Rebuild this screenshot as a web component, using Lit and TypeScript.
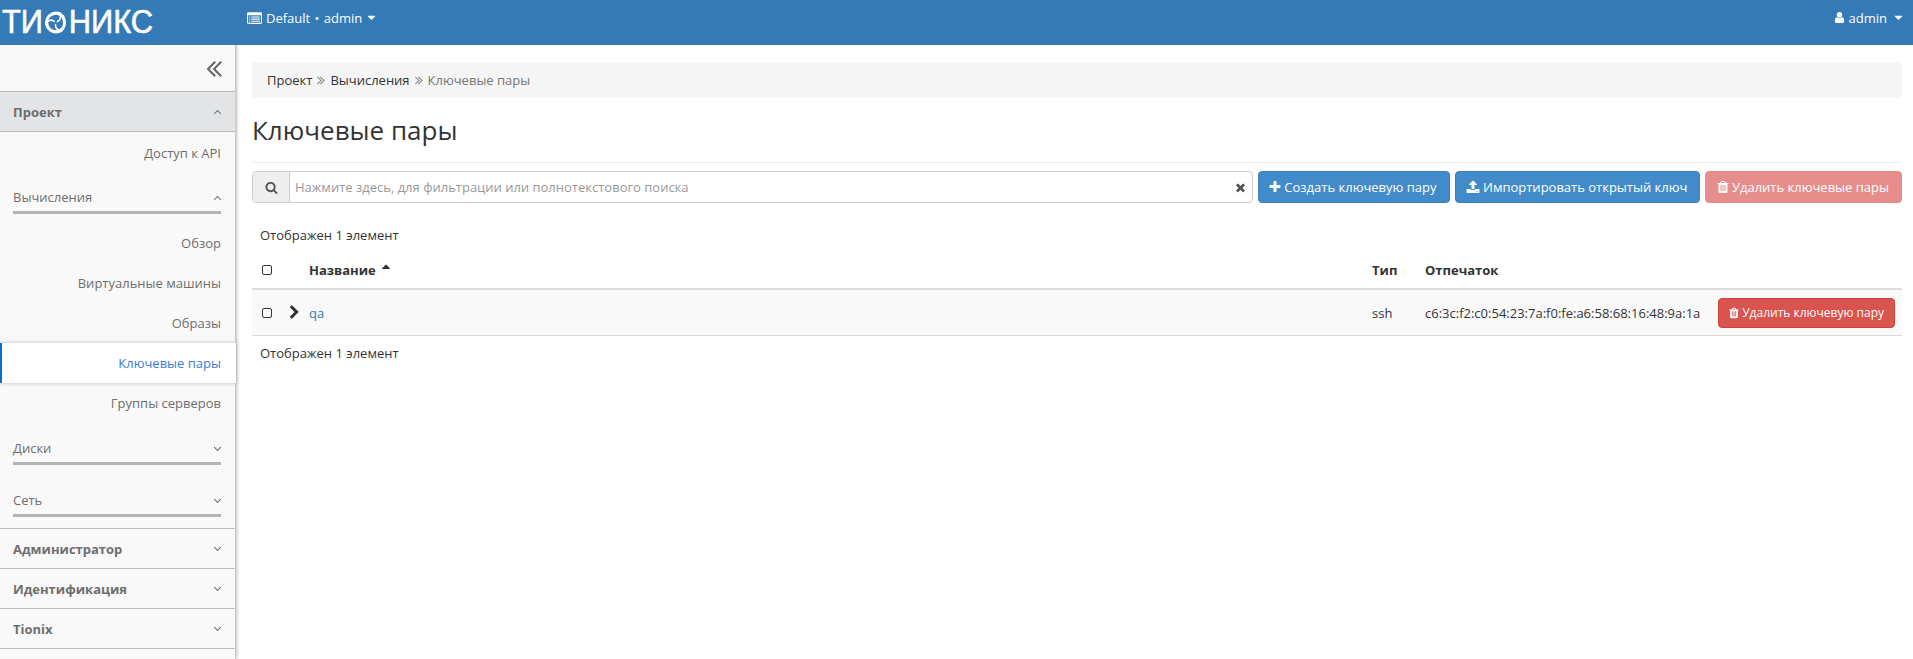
import { LitElement, html, css, svg } from "lit";
import { customElement } from "lit/decorators.js";

const P = {
  search: "M1216 832q0-185-131.5-316.5t-316.5-131.5-316.5 131.5-131.5 316.5 131.5 316.5 316.5 131.5 316.5-131.5 131.5-316.5zm512 832q0 52-38 90t-90 38q-54 0-90-38l-343-342q-179 124-399 124-143 0-273.5-55.5t-225-150-150-225-55.5-273.5 55.5-273.5 150-225 225-150 273.5-55.5 273.5 55.5 225 150 150 225 55.5 273.5q0 220-124 399l343 343q37 37 37 90z",
  plus: "M1600 736v192q0 40-28 68t-68 28h-416v416q0 40-28 68t-68 28h-192q-40 0-68-28t-28-68v-416h-416q-40 0-68-28t-28-68v-192q0-40 28-68t68-28h416v-416q0-40 28-68t68-28h192q40 0 68 28t28 68v416h416q40 0 68 28t28 68z",
  times: "M1490 1322q0 40-28 68l-136 136q-28 28-68 28t-68-28l-294-294-294 294q-28 28-68 28t-68-28l-136-136q-28-28-28-68t28-68l294-294-294-294q-28-28-28-68t28-68l136-136q28-28 68-28t68 28l294 294 294-294q28-28 68-28t68 28l136 136q28 28 28 68t-28 68l-294 294 294 294q28 28 28 68z",
  trash: "M704 1376v-704q0-14-9-23t-23-9h-64q-14 0-23 9t-9 23v704q0 14 9 23t23 9h64q14 0 23-9t9-23zm256 0v-704q0-14-9-23t-23-9h-64q-14 0-23 9t-9 23v704q0 14 9 23t23 9h64q14 0 23-9t9-23zm256 0v-704q0-14-9-23t-23-9h-64q-14 0-23 9t-9 23v704q0 14 9 23t23 9h64q14 0 23-9t9-23zm-544-992h448l-48-117q-7-9-17-11h-317q-10 2-17 11zm928 32v64q0 14-9 23t-23 9h-96v948q0 83-47 143.5t-113 60.5h-832q-66 0-113-58.5t-47-141.5v-952h-96q-14 0-23-9t-9-23v-64q0-14 9-23t23-9h309l70-167q15-37 54-63t79-26h320q40 0 79 26t54 63l70 167h309q14 0 23 9t9 23z",
  upload: "M1344 1472q0-26-19-45t-45-19-45 19-19 45 19 45 45 19 45-19 19-45zm256 0q0-26-19-45t-45-19-45 19-19 45 19 45 45 19 45-19 19-45zm128-224v320q0 40-28 68t-68 28h-1472q-40 0-68-28t-28-68v-320q0-40 28-68t68-28h427q21 56 70.5 92t110.5 36h256q61 0 110.5-36t70.5-92h427q40 0 68 28t28 68zm-325-648q-17 40-59 40h-256v448q0 26-19 45t-45 19h-256q-26 0-45-19t-19-45v-448h-256q-42 0-59-40-17-39 14-69l448-448q18-19 45-19t45 19l448 448q31 30 14 69z",
  user: "M1536 1399q0 109-62.5 187t-150.5 78h-854q-88 0-150.5-78t-62.5-187q0-85 8.5-160.5t31.5-152 58.5-131 94-89 134.5-34.5q131 128 313 128t313-128q76 0 134.5 34.5t94 89 58.5 131 31.5 152 8.5 160.5zm-256-887q0 159-112.5 271.5t-271.5 112.5-271.5-112.5-112.5-271.5 112.5-271.5 271.5-112.5 271.5 112.5 112.5 271.5z",
  chev: "M1363 877l-742 742q-19 19-45 19t-45-19l-166-166q-19-19-19-45t19-45l531-531-531-531q-19-19-19-45t19-45l166-166q19-19 45-19t45 19l742 742q19 19 19 45t-19 45z",
  up: "M1395 1184q0 13-10 23l-50 50q-10 10-23 10t-23-10l-393-393-393 393q-10 10-23 10t-23-10l-50-50q-10-10-10-23t10-23l466-466q10-10 23-10t23 10l466 466q10 10 10 23z",
  down: "M1395 736q0 13-10 23l-466 466q-10 10-23 10t-23-10l-466-466q-10-10-10-23t10-23l50-50q10-10 23-10t23 10l393 393 393-393q10-10 23-10t23 10l50 50q10 10 10 23z",
  dleft: "M1011 1376q0 13-10 23l-50 50q-10 10-23 10t-23-10l-466-466q-10-10-10-23t10-23l466-466q10-10 23-10t23 10l50 50q10 10 10 23t-10 23l-393 393 393 393q10 10 10 23zm384 0q0 13-10 23l-50 50q-10 10-23 10t-23-10l-466-466q-10-10-10-23t10-23l466-466q10-10 23-10t23 10l50 50q10 10 10 23t-10 23l-393 393 393 393q10 10 10 23z",
  dright: "M979 960q0 13-10 23l-466 466q-10 10-23 10t-23-10l-50-50q-10-10-10-23t10-23l393-393-393-393q-10-10-10-23t10-23l50-50q10-10 23-10t23 10l466 466q10 10 10 23zm384 0q0 13-10 23l-466 466q-10 10-23 10t-23-10l-50-50q-10-10-10-23t10-23l393-393-393-393q-10-10-10-23t10-23l50-50q10-10 23-10t23 10l466 466q10 10 10 23z",
  cdown: "M1408 704q0 26-19 45l-448 448q-19 19-45 19t-45-19l-448-448q-19-19-19-45t19-45 45-19h896q26 0 45 19t19 45z",
  cup: "M1408 1216q0 26-19 45t-45 19h-896q-26 0-45-19t-19-45 19-45l448-448q19-19 45-19t45 19l448 448q19 19 19 45z",
  list: "M160 256h1472q66 0 113 47t47 113v1088q0 66-47 113t-113 47H160q-66 0-113-47T0 1504V416q0-66 47-113t113-47zM128 640v864q0 13 9.5 22.5t22.5 9.5h1472q13 0 22.5-9.5t9.5-22.5V640zM256 768h128v128H256zm256 0h1024v128H512zm-256 256h128v128H256zm256 0h1024v128H512zm-256 256h128v128H256zm256 0h1024v128H512z",
};
const icon = (d: string, cls = "") =>
  html`<svg class="ic ${cls}" viewBox="0 0 1792 1792" aria-hidden="true">${svg`<path fill="currentColor" d=${d}></path>`}</svg>`;

@customElement("app-root")
export class AppRoot extends LitElement {
  static styles = css`
    :host { display: block; height: 100vh; overflow: hidden; font-family: "Open Sans", sans-serif; font-size: 13px; color: #333; background: #fff; }
    * { box-sizing: border-box; }
    .ic { width: 1em; height: 1em; display: inline-block; flex: none; vertical-align: -0.125em; }
    .top { height: 45px; background: #337ab7; color: #fff; display: flex; align-items: center; position: relative; z-index: 3; }
    .brand { width: 247px; height: 45px; flex: none; padding-left: 2px; display: flex; align-items: center; }
    .logo { display: flex; align-items: center; font-family: "Liberation Sans", sans-serif; font-size: 32.5px; line-height: 1; color: #fff; -webkit-text-stroke: 0.6px #fff; transform: scaleX(0.95); transform-origin: left center; }
    .swirl { width: 25px; height: 25px; margin: 0 1px; flex: none; }
    .proj { display: flex; align-items: center; gap: 4px; margin-bottom: 10px; word-spacing: 1px; }
    .proj .ic { font-size: 15px; }
    .proj .c { font-size: 13px; margin-left: -1px; }
    .usr .c { font-size: 13px; margin-left: 1px; }
    .usr { margin-left: auto; margin-right: 8px; margin-bottom: 10px; display: flex; align-items: center; gap: 4px; }
    .usr .u { margin-right: -1px; }
    .body { display: flex; height: 614px; }
    .side { width: 236px; flex: none; background: #f9f9f9; border-right: 1px solid #c8c8c8; box-shadow: 1px 0 3px rgba(0,0,0,.25); color: #6e6e6e; position: relative; z-index: 2; }
    .coll { height: 47px; border-bottom: 1px solid #bbb; display: flex; justify-content: flex-end; align-items: center; padding-right: 7px; color: #666; }
    .coll .ic { font-size: 28px; }
    .sec { height: 40px; display: flex; align-items: center; justify-content: space-between; padding: 0 11px 0 13px; font-weight: 700; border-bottom: 1px solid #bbb; color: #6e6e6e; }
    .sec.open { background: #e3e4e6; }
    .sec .ic, .sub .ic { font-size: 13px; color: #666; }
    .it { height: 40px; display: flex; align-items: center; justify-content: flex-end; padding-right: 14px; }
    .it.first { height: 42px; }
    .it.act { background: #fff; color: #3a7dd6; border-left: 2px solid #0a6ec4; margin-right: -1px; padding-right: 15px; box-shadow: 0 0 4px rgba(0,0,0,.25); position: relative; }
    .sub { margin: 0 14px 0 13px; height: 24px; display: flex; justify-content: space-between; align-items: center; }
    .sub .ic { margin-right: -3px; }
    .bar { height: 3px; background: #b5b5b5; margin: 2px 14px 0 13px; }
    .g1 { padding-top: 11px; }
    .g2 { padding-top: 13px; }
    .g3 { padding-top: 23px; }
    .g4 { padding-top: 11px; border-bottom: 1px solid #bbb; }
    .first-sub { margin-top: 9px; }
    .main { flex: 1; min-width: 0; padding: 17px 11px 0 16px; }
    .crumb { height: 36px; background: #f5f5f5; border-radius: 4px; display: flex; align-items: center; gap: 2px; padding: 0 15px; color: #777; }
    .crumb span.d { color: #333; }
    .crumb .ic { font-size: 14px; color: #888; }
    h1 { font-size: 26px; font-weight: 400; line-height: 34px; margin: 15px 0 13px; color: #333; height: 36px; }
    .rule { height: 1px; background: #eee; }
    .tools { display: flex; margin-top: 8px; gap: 5px; }
    .group { flex: 1; min-width: 0; height: 32px; display: flex; border: 1px solid #ccc; border-radius: 4px; overflow: hidden; }
    .addon { width: 37px; background: #eee; border-right: 1px solid #ccc; display: flex; align-items: center; justify-content: center; color: #555; font-size: 13px; flex: none; }
    .ph { flex: 1; padding: 0 5px; color: #999; display: flex; align-items: center; justify-content: space-between; white-space: nowrap; }
    .ph .ic { font-size: 13px; color: #555; }
    .btn { height: 32px; border: 1px solid #3a80bd; background: #428bca; color: #fff; border-radius: 4px; padding: 0 12px 0 11px; display: inline-flex; align-items: center; gap: 3.5px; white-space: nowrap; flex: none; }
    .btn .ic { font-size: 14px; margin: 0 -1.5px; }
    .btn .ic.wide { margin: 0 -0.5px; }
    .btn.off { background: #e78d8b; border-color: #e58a88; }
    .btn.red { background: #d9534f; border-color: #d43f3a; height: 30px; padding: 0 10px; font-size: 12px; gap: 3px; }
    .btn.red .ic { font-size: 12px; margin: 0 -1px; }
    .note { padding: 0 8px; height: 22px; display: flex; align-items: center; }
    .note.a { margin-top: 21px; }
    .note.b { margin-top: 6px; }
    .tr { display: grid; grid-template-columns: 8px 1fr 53px 293px 184px; align-items: center; }
    .th { height: 44px; padding-top: 5px; font-weight: 700; border-bottom: 2px solid #ddd; }
    .row { height: 46px; background: #f9f9f9; border-bottom: 1px solid #ddd; }
    .cell-n { display: flex; align-items: center; grid-column: 1 / 3; padding-left: 10px; }
    .box { width: 10px; height: 10px; border: 1px solid #333; border-radius: 2px; flex: none; background: #fff; }
    .chev { width: 30px; padding-left: 15px; display: flex; color: #333; font-size: 15px; flex: none; }
    .nm { margin-left: 7px; }
    .nm.h { margin-left: 37px; display: flex; align-items: center; gap: 3px; }
    .nm.h .ic { font-size: 14px; margin-top: -7px; }
    a { color: #337ab7; text-decoration: none; }
    .act-c { display: flex; justify-content: flex-end; padding-right: 7px; }
  `;

  private subGroup(name: string, cls: string, ic: string) {
    return html`<div class=${cls}><div class="sub"><span>${name}</span>${icon(ic)}</div><div class="bar"></div></div>`;
  }

  render() {
    return html`
      <div class="top">
        <div class="brand">
          <div class="logo">
            <span>ТИ</span>
            <svg class="swirl" viewBox="0 0 28 28" aria-hidden="true">
              <g fill="none" stroke="#fff" stroke-linecap="round">
                <g stroke-width="3.6">
                  <path d="M3.5 16 A11 11 0 0 1 19 4.5"></path>
                  <path d="M3.5 16 A11 11 0 0 1 19 4.5" transform="rotate(120 14 14)"></path>
                  <path d="M3.5 16 A11 11 0 0 1 19 4.5" transform="rotate(240 14 14)"></path>
                </g>
                <g stroke-width="1.8">
                  <path d="M19 4.5 Q21 11 16 13"></path>
                  <path d="M19 4.5 Q21 11 16 13" transform="rotate(120 14 14)"></path>
                  <path d="M19 4.5 Q21 11 16 13" transform="rotate(240 14 14)"></path>
                </g>
              </g>
            </svg>
            <span>НИКС</span>
          </div>
        </div>
        <div class="proj">${icon(P.list)}<span>Default • admin</span>${icon(P.cdown, "c")}</div>
        <div class="usr">${icon(P.user, "u")}<span>admin</span>${icon(P.cdown, "c")}</div>
      </div>
      <div class="body">
        <aside class="side">
          <div class="coll">${icon(P.dleft)}</div>
          <div class="sec open"><span>Проект</span>${icon(P.up)}</div>
          <div class="it first">Доступ к API</div>
          ${this.subGroup("Вычисления", "g1", P.up)}
          <div class="first-sub it">Обзор</div>
          <div class="it">Виртуальные машины</div>
          <div class="it">Образы</div>
          <div class="it act">Ключевые пары</div>
          <div class="it">Группы серверов</div>
          ${this.subGroup("Диски", "g2", P.down)}
          ${this.subGroup("Сеть", "g3", P.down)}
          <div class="g4"></div>
          <div class="sec"><span>Администратор</span>${icon(P.down)}</div>
          <div class="sec"><span>Идентификация</span>${icon(P.down)}</div>
          <div class="sec"><span>Tionix</span>${icon(P.down)}</div>
        </aside>
        <main class="main">
          <div class="crumb"><span class="d">Проект</span>${icon(P.dright)}<span class="d">Вычисления</span>${icon(P.dright)}<span>Ключевые пары</span></div>
          <h1>Ключевые пары</h1>
          <div class="rule"></div>
          <div class="tools">
            <div class="group">
              <div class="addon">${icon(P.search)}</div>
              <div class="ph"><span>Нажмите здесь, для фильтрации или полнотекстового поиска</span>${icon(P.times)}</div>
            </div>
            <div class="btn">${icon(P.plus)}Создать ключевую пару</div>
            <div class="btn">${icon(P.upload, "wide")}Импортировать открытый ключ</div>
            <div class="btn off">${icon(P.trash)}Удалить ключевые пары</div>
          </div>
          <div class="note a">Отображен 1 элемент</div>
          <div class="tr th">
            <div class="cell-n"><span class="box"></span><span class="nm h">Название ${icon(P.cup)}</span></div>
            <div>Тип</div>
            <div>Отпечаток</div>
            <div></div>
          </div>
          <div class="tr row">
            <div class="cell-n"><span class="box"></span><span class="chev">${icon(P.chev)}</span><span class="nm"><a>qa</a></span></div>
            <div>ssh</div>
            <div>c6:3c:f2:c0:54:23:7a:f0:fe:a6:58:68:16:48:9a:1a</div>
            <div class="act-c"><div class="btn red">${icon(P.trash)}Удалить ключевую пару</div></div>
          </div>
          <div class="note b">Отображен 1 элемент</div>
        </main>
      </div>
    `;
  }
}
